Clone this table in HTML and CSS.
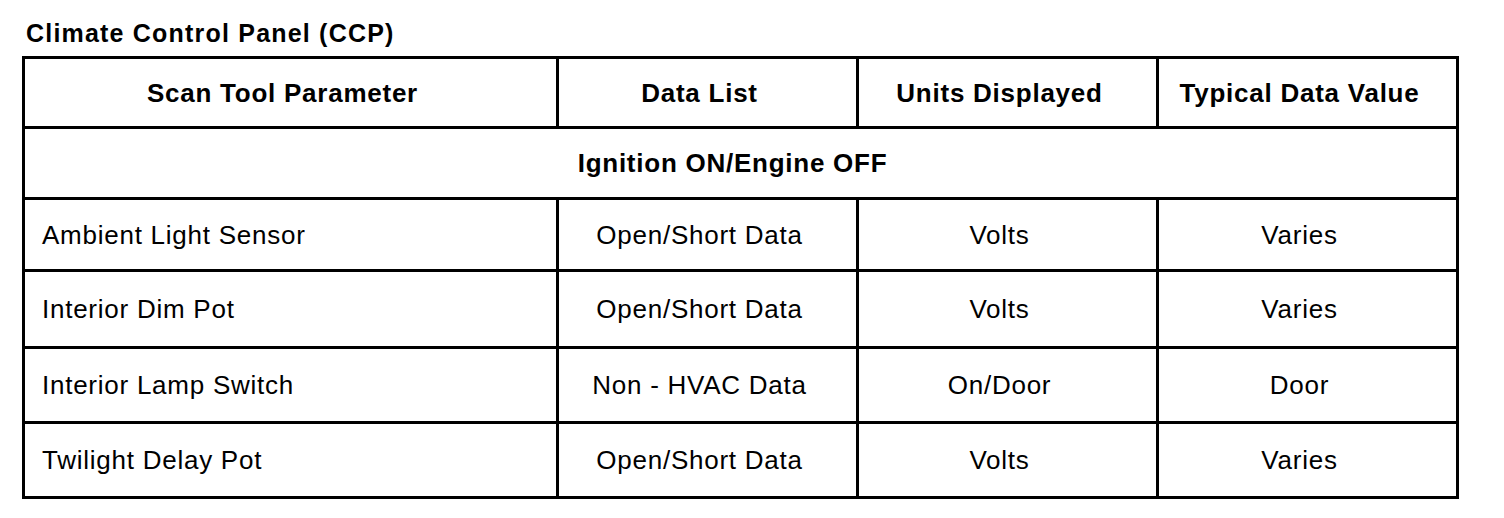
FILE: index.html
```html
<!DOCTYPE html>
<html lang="en">
<head>
<meta charset="utf-8">
<title>Climate Control Panel (CCP)</title>
<link rel="stylesheet" href="styles.css">
</head>
<body>
<div class="page">
  <h1 class="title">Climate Control Panel (CCP)</h1>
  <table class="data">
    <colgroup>
      <col class="c1"><col class="c2"><col class="c3"><col class="c4">
    </colgroup>
    <thead>
      <tr class="r-head">
        <th>Scan Tool Parameter</th>
        <th>Data List</th>
        <th>Units Displayed</th>
        <th>Typical Data Value</th>
      </tr>
    </thead>
    <tbody>
      <tr class="r-group">
        <th colspan="4">Ignition ON/Engine OFF</th>
      </tr>
      <tr class="r1">
        <td class="param">Ambient Light Sensor</td>
        <td>Open/Short Data</td>
        <td>Volts</td>
        <td>Varies</td>
      </tr>
      <tr class="r2">
        <td class="param">Interior Dim Pot</td>
        <td>Open/Short Data</td>
        <td>Volts</td>
        <td>Varies</td>
      </tr>
      <tr class="r3">
        <td class="param">Interior Lamp Switch</td>
        <td>Non - HVAC Data</td>
        <td>On/Door</td>
        <td>Door</td>
      </tr>
      <tr class="r4">
        <td class="param">Twilight Delay Pot</td>
        <td>Open/Short Data</td>
        <td>Volts</td>
        <td>Varies</td>
      </tr>
    </tbody>
  </table>
</div>
</body>
</html>
```

FILE: styles.css
```css
* { box-sizing: border-box; }
html, body {
  margin: 0;
  padding: 0;
  background: #fff;
}
body {
  font-family: "Liberation Sans", Arial, Helvetica, sans-serif;
  color: #000;
}
.page {
  padding: 18px 0 0 22px;
}
.title {
  margin: 0 0 0 4px;
  font-size: 25px;
  line-height: 30px;
  font-weight: bold;
  letter-spacing: 1.2px;
  height: 38px;
}
.data {
  border-collapse: separate;
  border-spacing: 0;
  table-layout: fixed;
  width: 1437px;
  border-left: 3px solid #000;
  border-top: 3px solid #000;
}
.c1 { width: 534px; }
.c2, .c3, .c4 { width: 300px; }
.data th,
.data td {
  border-right: 3px solid #000;
  border-bottom: 3px solid #000;
  padding: 0 16px 0 0;
  text-align: center;
  vertical-align: middle;
  font-size: 26px;
  line-height: 30px;
  letter-spacing: 0.75px;
}
.data th { font-weight: bold; }
.data td { font-weight: normal; }
.data td.param {
  text-align: left;
  padding-left: 17px;
  padding-right: 0;
}
.r-head th { height: 70px; }
.r-group th { height: 71px; }
.r1 td { height: 72px; }
.r2 td { height: 77px; }
.r3 td { height: 75px; }
.r4 td { height: 75px; }
```
